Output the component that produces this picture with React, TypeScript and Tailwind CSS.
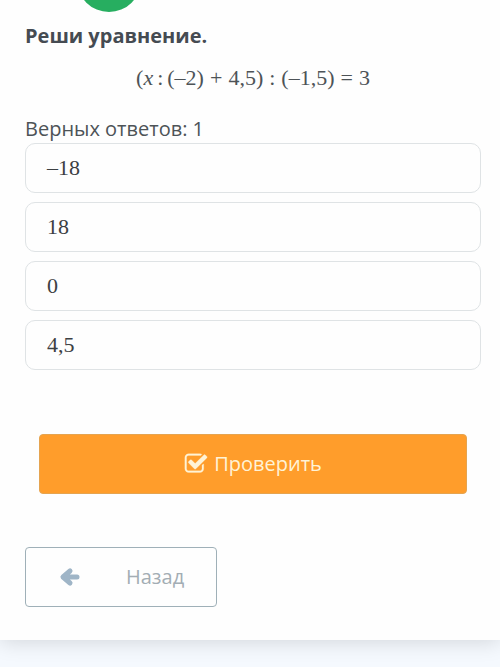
import { useState } from "react";

const answers = ["–18", "18", "0", "4,5"];

const CheckIcon = () => (
  <svg viewBox="0 0 1792 1792" className="size-6 fill-current" aria-hidden="true">
    <path
      d="M1472 930v318q0 119-84.5 203.5t-203.5 84.5h-832q-119 0-203.5-84.5t-84.5-203.5v-832q0-119 84.5-203.5t203.5-84.5h832q63 0 117 25 15 7 18 23 3 17-9 29l-49 49q-10 10-23 10-3 0-9-2-23-6-45-6h-832q-66 0-113 47t-47 113v832q0 66 47 113t113 47h832q66 0 113-47t47-113v-254q0-13 9-22l64-64q10-10 23-10 6 0 12 3 20 8 20 29zm231-489l-814 814q-24 24-57 24t-57-24l-430-430q-24-24-24-57t24-57l110-110q24-24 57-24t57 24l263 263 647-647q24-24 57-24t57 24l110 110q24 24 24 57t-24 57z"
      stroke="currentColor"
      strokeWidth="20"
    />
  </svg>
);

const ArrowIcon = () => (
  <svg viewBox="0 0 24 24" className="size-6 fill-none stroke-current" aria-hidden="true">
    <path
      d="M12 6L5 12l7 6M6 12h13"
      strokeWidth="5"
      strokeLinecap="round"
      strokeLinejoin="round"
    />
    <path d="M5 12l5-4v8z" className="fill-current" />
  </svg>
);

const Equation = () => (
  <p className="flex items-center justify-center gap-1.5 font-['Liberation_Serif',serif] text-[22px] leading-8">
    <span className="flex gap-1">
      <span>
        (<i>x</i>
      </span>
      <span>:</span>
      <span>(–2)</span>
    </span>
    <span>+</span>
    <span className="flex gap-1.5">
      <span>4,5)</span>
      <span>:</span>
      <span>(–1,5)</span>
    </span>
    <span>=</span>
    <span>3</span>
  </p>
);

const App = () => {
  const [selected, setSelected] = useState<string | null>(null);

  return (
    <div className="min-h-screen overflow-hidden bg-[#f5f9fe] font-['Open_Sans','Noto_Sans',sans-serif] text-xl text-[#4d5357]">
      <main className="bg-[#fefefe] pr-[19px] pb-[33px] pl-[25px] shadow-[0_2px_20px_rgba(0,0,0,0.14)]">
        <div className="flex h-3 items-end overflow-hidden pl-[52px]">
          <div className="size-16 shrink-0 rounded-full bg-[#27ae60]" />
        </div>
        <h1 className="mt-2 leading-8 font-bold text-[#454b52]">
          Реши уравнение.
        </h1>
        <div className="mt-2.5">
          <Equation />
        </div>
        <p className="mt-[21px] leading-7">Верных ответов: 1</p>
        <ul className="flex flex-col gap-[9px]">
          {answers.map((answer) => (
            <li key={answer}>
              <button
                type="button"
                aria-pressed={selected === answer}
                onClick={() => setSelected(answer)}
                className="h-[50px] w-full cursor-pointer rounded-[10px] border border-[#dfe3e5] px-[21px] text-left font-['Liberation_Serif',serif] text-[22px] text-[#3c4043] aria-pressed:border-[#ff9d2b]"
              >
                {answer}
              </button>
            </li>
          ))}
        </ul>
        <div className="mt-16 px-3.5">
          <button
            type="button"
            className="flex h-[60px] w-full cursor-pointer items-center justify-center gap-1.5 rounded-sm border border-[#e5a450] bg-[#ff9d2b] text-[#fff3d6]"
          >
            <CheckIcon />
            Проверить
          </button>
        </div>
        <button
          type="button"
          className="mt-[53px] flex h-[60px] w-48 cursor-pointer items-center gap-11 rounded-sm border border-[#9fb0b8] pl-8 text-[#a3adb4]"
        >
          <span className="text-[#9fb5c7]">
            <ArrowIcon />
          </span>
          Назад
        </button>
      </main>
    </div>
  );
};

export default App;
